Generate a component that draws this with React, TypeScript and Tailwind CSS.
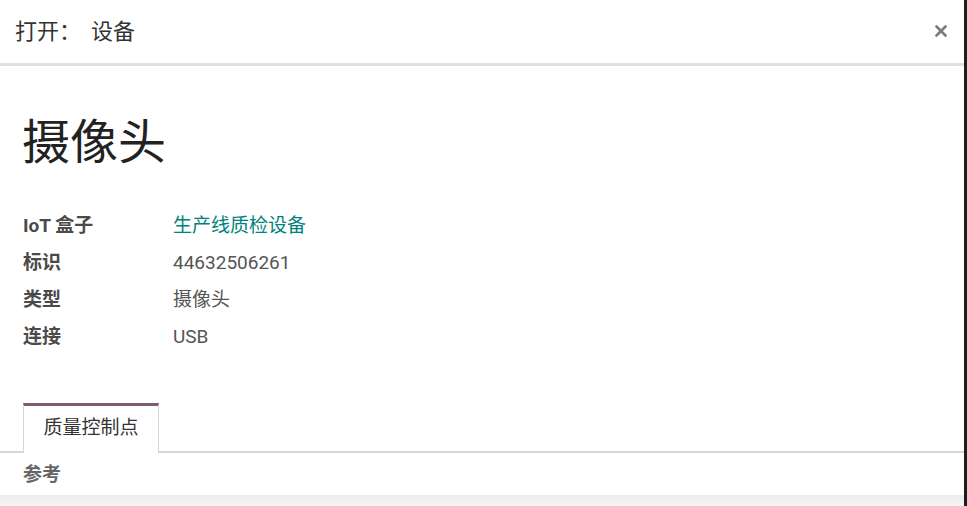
const font = { fontFamily: 'Roboto, "Noto Sans CJK SC", sans-serif' }

const fields = [
  { label: 'IoT 盒子', value: '生产线质检设备', link: true },
  { label: '标识', value: '44632506261' },
  { label: '类型', value: '摄像头' },
  { label: '连接', value: 'USB' },
]

export default function App() {
  return (
    <div className="flex h-[506px] w-[967px] overflow-hidden bg-white" style={font}>
      <div className="flex flex-1 flex-col">
        <header className="flex h-[66px] shrink-0 items-center justify-between border-b-[3px] border-[#dde1e4] pl-[15px] pr-[17px]">
          <h4 className="flex items-center text-[22px] text-[#333]">
            <span>打开：</span>
            <span className="ml-[10px]">设备</span>
          </h4>
          <svg width="12" height="12" viewBox="0 0 12 12" className="mb-[2px]">
            <path d="M1.5 1.5 L10.5 10.5 M10.5 1.5 L1.5 10.5" stroke="#7a7a7a" strokeWidth="2.6" strokeLinecap="round" />
          </svg>
        </header>

        <main className="flex flex-1 flex-col">
          <h1 className="mt-[49px] px-[22px] text-[48px] leading-[56px] text-[#222]">摄像头</h1>

          <div className="mt-[36px] flex flex-col px-[23px] text-[19px] leading-[37px]">
            {fields.map((f) => (
              <div key={f.label} className="flex">
                <span className="w-[150px] font-bold text-[#4a4a4a]">{f.label}</span>
                <span className={f.link ? 'text-[#01827b]' : 'text-[#555]'}>{f.value}</span>
              </div>
            ))}
          </div>

          <div className="mt-[48px] flex border-b-2 border-[#d6d6d6] pl-[23px]">
            <div className="-mb-[2px] flex h-[50px] w-[136px] items-center justify-center border-x border-t-[3px] border-x-[#d6d6d6] border-t-[#7d5a76] bg-white pb-[2px] text-[19px] text-[#333]">
              质量控制点
            </div>
          </div>

          <div className="flex h-[42px] items-center px-[23px] pt-[3px] text-[19px] font-bold text-[#666]">参考</div>

          <div className="flex-1 bg-gradient-to-b from-[#ececec] to-[#f5f5f5]" />
        </main>
      </div>
      <div className="w-[3px] shrink-0 bg-[#1e1e1e]" />
    </div>
  )
}
